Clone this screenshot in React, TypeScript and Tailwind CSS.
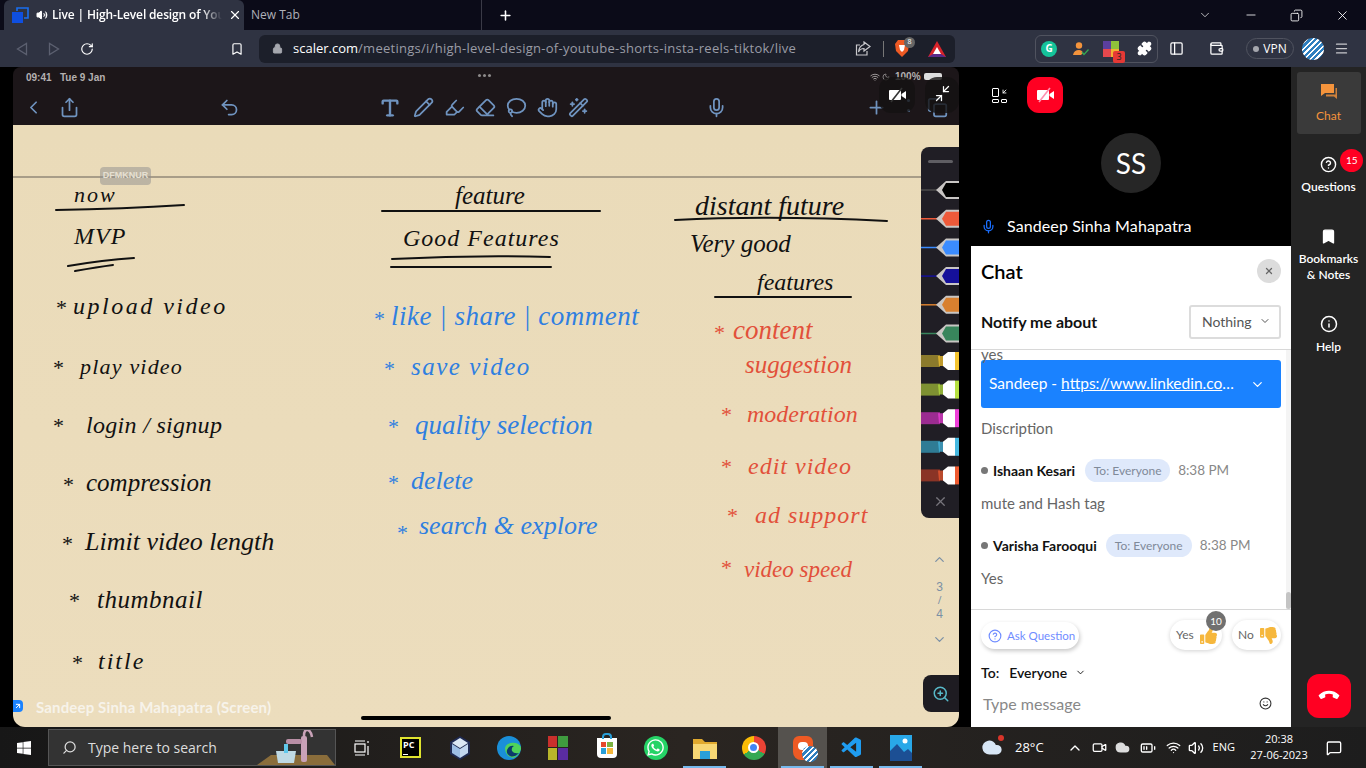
import {
  ArrowDownLeft,
  ArrowUpRight,
  Bookmark,
  ChevronDown,
  ChevronLeft,
  ChevronUp,
  Copy,
  Info,
  Lock,
  Mic,
  Minus,
  Pencil,
  Plus,
  RotateCw,
  Search,
  Share,
  Undo2,
  Volume2,
  Wifi,
  X,
  ZoomIn,
  Eraser,
  Highlighter,
  Puzzle,
  Wallet,
  PanelLeft,
  Menu,
  Smile,
  CircleHelp,
  BatteryMedium,
  Cloud,
  MessageSquare,
  Video,
  Type,
  Hand,
  Wand2,
  Lasso,
  Moon,
} from 'lucide-react'
import { FaThumbsDown, FaThumbsUp, FaWhatsapp, FaWindows, FaPhone } from 'react-icons/fa'
import { VscVscode } from 'react-icons/vsc'

const hand = "font-['Liberation_Serif',serif] italic whitespace-nowrap absolute leading-none"

const notes = [
  { t: 'now', c: 'left-[61px] top-[59px] text-[22px] tracking-[2px] text-[#111]' },
  { t: 'MVP', c: 'left-[61px] top-[99px] text-[24px] tracking-[1px] text-[#111]' },
  { t: 'upload video', c: 'left-[60px] top-[169px] text-[24px] tracking-[2.5px] text-[#111]' },
  { t: 'play video', c: 'left-[67px] top-[231px] text-[22px] tracking-[1.2px] text-[#111]' },
  { t: 'login / signup', c: 'left-[73px] top-[288px] text-[24px] tracking-[0.3px] text-[#111]' },
  { t: 'compression', c: 'left-[73px] top-[345px] text-[25px] text-[#111]' },
  { t: 'Limit video length', c: 'left-[72px] top-[404px] text-[26px] text-[#111]' },
  { t: 'thumbnail', c: 'left-[84px] top-[462px] text-[25px] tracking-[0.5px] text-[#111]' },
  { t: 'title', c: 'left-[85px] top-[524px] text-[24px] tracking-[2px] text-[#111]' },
  { t: 'feature', c: 'left-[442px] top-[58px] text-[25px] text-[#111]' },
  { t: 'Good Features', c: 'left-[390px] top-[101px] text-[24px] tracking-[1px] text-[#111]' },
  { t: 'like | share | comment', c: 'left-[378px] top-[178px] text-[27px] tracking-[0.5px] text-[#2f7fe0]' },
  { t: 'save video', c: 'left-[398px] top-[229px] text-[25px] tracking-[1.5px] text-[#2f7fe0]' },
  { t: 'quality selection', c: 'left-[402px] top-[287px] text-[27px] text-[#2f7fe0]' },
  { t: 'delete', c: 'left-[398px] top-[343px] text-[26px] text-[#2f7fe0]' },
  { t: 'search & explore', c: 'left-[406px] top-[388px] text-[26px] text-[#2f7fe0]' },
  { t: 'distant future', c: 'left-[682px] top-[67px] text-[28px] text-[#111]' },
  { t: 'Very good', c: 'left-[677px] top-[106px] text-[25px] text-[#111]' },
  { t: 'features', c: 'left-[744px] top-[145px] text-[24px] text-[#111]' },
  { t: 'content', c: 'left-[720px] top-[192px] text-[27px] text-[#e2503a]' },
  { t: 'suggestion', c: 'left-[732px] top-[227px] text-[25px] text-[#e2503a]' },
  { t: 'moderation', c: 'left-[734px] top-[277px] text-[24px] text-[#e2503a]' },
  { t: 'edit video', c: 'left-[735px] top-[329px] text-[24px] tracking-[1px] text-[#e2503a]' },
  { t: 'ad support', c: 'left-[742px] top-[378px] text-[24px] tracking-[1px] text-[#e2503a]' },
  { t: 'video speed', c: 'left-[731px] top-[433px] text-[23px] text-[#e2503a]' },
]

const bullets = [
  { c: 'left-[43px] top-[172px] text-[#111]' },
  { c: 'left-[40px] top-[232px] text-[#111]' },
  { c: 'left-[40px] top-[290px] text-[#111]' },
  { c: 'left-[50px] top-[349px] text-[#111]' },
  { c: 'left-[49px] top-[408px] text-[#111]' },
  { c: 'left-[56px] top-[465px] text-[#111]' },
  { c: 'left-[59px] top-[527px] text-[#111]' },
  { c: 'left-[361px] top-[183px] text-[#2f7fe0]' },
  { c: 'left-[371px] top-[233px] text-[#2f7fe0]' },
  { c: 'left-[375px] top-[291px] text-[#2f7fe0]' },
  { c: 'left-[375px] top-[347px] text-[#2f7fe0]' },
  { c: 'left-[384px] top-[397px] text-[#2f7fe0]' },
  { c: 'left-[701px] top-[197px] text-[#e2503a]' },
  { c: 'left-[708px] top-[279px] text-[#e2503a]' },
  { c: 'left-[708px] top-[331px] text-[#e2503a]' },
  { c: 'left-[714px] top-[380px] text-[#e2503a]' },
  { c: 'left-[708px] top-[432px] text-[#e2503a]' },
]

const fineliners = ['#000000', '#ee5a3a', '#3b8cff', '#15109a', '#d8802f', '#38855c']
const markers = ['#8b7a2c:#f4c430', '#7e9132:#b5e040', '#9b2c91:#ee3fd8', '#2f7c95:#45b8e0', '#8a3426:#ee5a30']

function CamOff({ slash }: { slash: string }) {
  return (
    <svg width="19" height="16" viewBox="0 0 19 16">
      <rect x="1" y="3" width="12" height="10" rx="1" fill="#fff" />
      <path d="M13.5 7L18 4V12L13.5 9Z" fill="#fff" />
      <path d="M3 15L14 1" stroke={slash} strokeWidth="1.6" />
    </svg>
  )
}

function PenTray() {
  return (
    <div className="absolute right-0 top-[22px] h-[371px] w-[38px] overflow-hidden rounded-l-lg bg-[#201e25]">
      <div className="absolute left-[7px] top-[13px] h-[3px] w-[25px] rounded bg-[#5f5e63]" />
      <svg className="absolute left-0 top-0" width="38" height="371" viewBox="0 0 38 371">
        {fineliners.map((color, i) => {
          const y = 43 + i * 28.7
          return (
            <g key={color}>
              <path d={`M0 ${y}H16`} stroke={color === '#000000' ? '#4b4b4b' : color} strokeWidth="1.5" />
              <path d={`M15 ${y}L25 ${y - 9}H38V${y + 9}H25Z`} fill="#c9c6c4" />
              <path d={`M25 ${y - 7}H38V${y + 7}H25L21 ${y}Z`} fill={color} />
            </g>
          )
        })}
        {markers.map((pair, i) => {
          const [band, tip] = pair.split(':')
          const y = 214 + i * 28.6
          return (
            <g key={pair}>
              <rect x="0" y={y - 6} width="19" height="12" fill={band} />
              <path d={`M17 ${y - 5}H23V${y + 5}H18Z`} fill={tip} opacity="0.75" />
              <path d={`M22 ${y - 5}L27 ${y - 9}H34V${y + 9}H27L22 ${y + 5}Z`} fill="#fff" />
              <rect x="34" y={y - 9} width="4" height="18" fill={tip} />
            </g>
          )
        })}
      </svg>
      <X className="absolute left-[12px] top-[347px] h-[15px] w-[15px] text-[#77757c]" />
    </div>
  )
}

function Paper() {
  return (
    <div className="relative flex-1 bg-gradient-to-b from-[#eadbb9] to-[#ecddbd]">
      <div className="absolute inset-x-0 top-[51px] h-[2px] bg-[#a89d88]" />
      <div className="absolute left-[87px] top-[42px] flex h-[18px] w-[51px] items-center justify-center rounded-sm bg-[#8e8e8e]/50 font-['Liberation_Sans',sans-serif] text-[9px] font-bold text-[#e6e0d2]">
        DFMKNUR
      </div>
      {notes.map((n) => (
        <span key={n.t} className={`${hand} ${n.c}`}>
          {n.t}
        </span>
      ))}
      {bullets.map((b) => (
        <span key={b.c} className={`${hand} text-[22px] not-italic ${b.c}`}>
          *
        </span>
      ))}
      {/* pen strokes under the headings */}
      <svg className="absolute left-0 top-0" width="908" height="300" viewBox="0 0 908 300" fill="none" strokeLinecap="round">
        <g stroke="#111" strokeWidth="2">
          <path d="M43 85Q110 84 171 80" />
          <path d="M55 141Q90 135 121 133M62 146Q85 142 100 140" />
          <path d="M369 86H587" />
          <path d="M379 134Q460 130 537 132M378 142H538" />
          <path d="M662 95Q760 90 874 96" />
          <path d="M702 172H838" />
        </g>
      </svg>
      <PenTray />
      <div className="absolute right-[12px] top-[427px] flex flex-col items-center text-[#7b90a5]">
        <ChevronUp className="h-[15px] w-[15px]" />
        <div className="mt-[13px] font-['Liberation_Sans',sans-serif] text-[12px] leading-[14px]">3</div>
        <div className="text-[10px] leading-[13px]">/</div>
        <div className="font-['Liberation_Sans',sans-serif] text-[12px] leading-[14px]">4</div>
        <ChevronDown className="mt-[11px] h-[15px] w-[15px]" />
      </div>
      <div className="absolute right-0 top-[550px] flex h-[37px] w-[36px] items-center justify-center rounded-l-lg bg-[#1e1c22]">
        <ZoomIn className="h-[18px] w-[18px] text-[#57b8c8]" />
      </div>
      <div className="absolute left-[348px] top-[591px] h-[4px] w-[250px] rounded-full bg-black" />
      <div className="absolute left-[23px] top-[571px] font-['Lato',sans-serif] text-[15px] font-bold tracking-[0.15px] text-[#f7f3ea]">
        Sandeep Sinha Mahapatra (Screen)
      </div>
      <div className="absolute left-0 top-[575px] flex h-[12px] w-[10px] items-center justify-center rounded-r-sm bg-[#1a82ff]">
        <ArrowUpRight className="h-[8px] w-[8px] text-white" strokeWidth={3} />
      </div>
    </div>
  )
}

function VideoArea() {
  const icon = 'h-[21px] w-[21px] text-[#6f93bf]'
  return (
    <div className="relative w-[971px] bg-black">
      <div className="ml-[13px] flex h-[660px] w-[946px] flex-col overflow-hidden rounded-b-xl rounded-t-lg">
        <div className="relative h-[58px] bg-[#1c1619] font-['Liberation_Sans',sans-serif] text-[#b4b0b0]">
          <div className="absolute left-[13px] top-[3px] text-[10px] font-bold">09:41&nbsp;&nbsp; Tue 9 Jan</div>
          <div className="absolute left-[465px] top-[7px] flex gap-[2px]">
            <i className="h-[3px] w-[3px] rounded-full bg-[#8d8a8a]" />
            <i className="h-[3px] w-[3px] rounded-full bg-[#8d8a8a]" />
            <i className="h-[3px] w-[3px] rounded-full bg-[#8d8a8a]" />
          </div>
          <div className="absolute left-[857px] top-[2px] flex items-center gap-[2px] text-[10px] font-bold">
            <Wifi className="h-[10px] w-[10px]" />
            <Moon className="h-[8px] w-[8px]" />
            <span className="ml-[3px]">100%</span>
            <span className="ml-[1px] h-[7px] w-[18px] rounded-[2px] bg-[#ddd]" />
          </div>
          <ChevronLeft className={`absolute left-[10px] top-[30px] ${icon}`} />
          <Share className={`absolute left-[46px] top-[30px] ${icon}`} />
          <Undo2 className={`absolute left-[206px] top-[30px] ${icon}`} />
          <Type className="absolute left-[366px] top-[30px] h-[22px] w-[22px] text-[#6f93bf]" strokeWidth={2.6} />
          <Pencil className={`absolute left-[400px] top-[30px] ${icon}`} />
          <Highlighter className={`absolute left-[431px] top-[30px] ${icon}`} />
          <Eraser className={`absolute left-[462px] top-[30px] ${icon}`} />
          <Lasso className={`absolute left-[493px] top-[30px] ${icon}`} />
          <Hand className={`absolute left-[524px] top-[30px] ${icon}`} />
          <Wand2 className={`absolute left-[555px] top-[30px] ${icon}`} />
          <Mic className={`absolute left-[693px] top-[30px] ${icon}`} />
          <Plus className={`absolute left-[853px] top-[30px] ${icon}`} />
          <div className="absolute left-[894px] top-[32px] flex flex-col gap-[7px]">
            <i className="h-[3px] w-[3px] rounded-full bg-[#6f93bf]" />
            <i className="h-[3px] w-[3px] rounded-full bg-[#6f93bf]" />
          </div>
          <Copy className={`absolute left-[914px] top-[30px] ${icon}`} />
        </div>
        <Paper />
      </div>
      {/* meeting overlay buttons sit on the shared screen */}
      <div className="absolute left-[879px] top-[10px] flex h-[36px] w-[36px] items-center justify-center rounded-xl bg-[#141112]/80">
        <CamOff slash="#333" />
      </div>
      <div className="absolute left-[925px] top-[10px] flex h-[36px] w-[34px] items-center justify-center rounded-xl bg-[#141112]/80">
        <ArrowDownLeft className="absolute left-[15px] top-[6px] h-[12px] w-[12px] text-white" strokeWidth={2.5} />
        <ArrowUpRight className="absolute left-[8px] top-[15px] h-[12px] w-[12px] text-white" strokeWidth={2.5} />
      </div>
    </div>
  )
}

function Pill({ wide }: { wide?: boolean }) {
  return (
    <span className={`flex h-[23px] items-center justify-center rounded-full bg-[#dfe9fb] text-[12px] text-[#7f8a99] ${wide ? 'w-[86px]' : 'w-[85px]'}`}>
      To: Everyone
    </span>
  )
}

function ChatPanel() {
  return (
    <div className="flex w-[320px] flex-col font-['Lato',sans-serif]">
      <div className="relative h-[179px] bg-black text-white">
        <div className="absolute left-[21px] top-[21px] grid h-[15px] w-[15px] grid-cols-2 gap-[2px]">
          <i className="rounded-[1px] border-[1.5px] border-white" />
          <ArrowDownLeft className="h-[7px] w-[7px] text-white" strokeWidth={3} />
          <i className="rounded-[1px] border-[1.5px] border-white" />
          <i className="rounded-[1px] border-[1.5px] border-white" />
        </div>
        <div className="absolute left-[56px] top-[10px] flex h-[36px] w-[36px] items-center justify-center rounded-xl bg-[#ff0022]">
          <CamOff slash="#ff8fb0" />
        </div>
        <div className="absolute left-[130px] top-[66px] flex h-[60px] w-[60px] items-center justify-center rounded-full bg-[#262626] text-[28px]">
          SS
        </div>
        <div className="absolute left-[10px] top-[147px] flex items-center">
          <Mic className="h-[15px] w-[15px] text-[#1a6fff]" />
          <span className="ml-[11px] text-[16px] tracking-[0.1px]">Sandeep Sinha Mahapatra</span>
        </div>
      </div>

      <div className="flex flex-1 flex-col bg-white text-[#333]">
        <div className="flex h-[104px] flex-col border-b border-[#d8d8d8] px-[10px]">
          <div className="mt-[13px] flex items-center justify-between">
            <span className="text-[20px] font-semibold leading-[24px] text-black">Chat</span>
            <span className="flex h-[24px] w-[24px] items-center justify-center rounded-full bg-[#dcdcdc]">
              <X className="h-[10px] w-[10px] text-[#666]" strokeWidth={3} />
            </span>
          </div>
          <div className="mt-[22px] flex items-center justify-between">
            <span className="text-[16px] font-bold leading-[20px] text-[#111]">Notify me about</span>
            <span className="flex h-[34px] w-[92px] items-center gap-[7px] rounded-[3px] border-2 border-[#dcdcdc] pb-[2px] pl-[11px] text-[14px] text-[#555]">
              Nothing
              <ChevronDown className="h-[12px] w-[12px]" />
            </span>
          </div>
        </div>

        <div className="relative h-[260px] overflow-hidden border-b border-[#d8d8d8] pl-[10px] pr-[10px] text-[16px] text-[#666]">
          <div className="h-[10px] text-[15px] leading-[8px]">yes</div>
          <div className="flex h-[48px] w-[300px] items-center justify-between rounded-[3px] bg-[#1a82ff] pl-[8px] pr-[16px] text-white">
            <span className="w-[252px] truncate text-[15.5px]">
              Sandeep - <span className="underline">https://www.linkedin.com/in/sandeep</span>
            </span>
            <ChevronDown className="h-[15px] w-[15px]" />
          </div>
          <div className="mt-[10px] text-[15px] leading-[20px]">Discription</div>
          <div className="mt-[21px] flex h-[23px] items-center">
            <i className="h-[7px] w-[7px] rounded-full bg-[#777]" />
            <b className="ml-[5px] text-[14px] text-[#111]">Ishaan Kesari</b>
            <span className="ml-[10px]"><Pill /></span>
            <span className="ml-[8px] text-[13.5px] text-[#888]">8:38 PM</span>
          </div>
          <div className="mt-[11px] text-[15px] leading-[20px]">mute and Hash tag</div>
          <div className="mt-[21px] flex h-[23px] items-center">
            <i className="h-[7px] w-[7px] rounded-full bg-[#777]" />
            <b className="ml-[5px] text-[14px] text-[#111]">Varisha Farooqui</b>
            <span className="ml-[9px]"><Pill wide /></span>
            <span className="ml-[8px] text-[13.5px] text-[#888]">8:38 PM</span>
          </div>
          <div className="mt-[11px] text-[15px] leading-[20px]">Yes</div>
          <div className="absolute right-0 top-0 h-full w-[5px] bg-[#f4f4f4]" />
          <div className="absolute bottom-0 right-0 h-[17px] w-[5px] rounded bg-[#c4c4c4]" />
        </div>

        <div className="relative flex-1 px-[10px]">
          <div className="absolute left-[10px] top-[12px] flex h-[27px] w-[98px] items-center gap-[5px] whitespace-nowrap rounded-full pl-[7px] text-[11.5px] text-[#6f8cff] shadow-[1px_2px_4px_rgba(0,0,0,0.22)]">
            <CircleHelp className="h-[14px] w-[14px]" />
            Ask Question
          </div>
          <div className="absolute left-[199px] top-[10px] flex h-[30px] w-[52px] items-center gap-[6px] rounded-full pl-[6px] text-[12px] text-[#666] shadow-[0_1px_4px_rgba(0,0,0,0.18)]">
            Yes
            <FaThumbsUp className="h-[17px] w-[17px] text-[#f6b73c]" />
          </div>
          <div className="absolute left-[235px] top-[1px] flex h-[20px] w-[20px] items-center justify-center rounded-full bg-[#707070] text-[10px] text-white">
            10
          </div>
          <div className="absolute left-[261px] top-[10px] flex h-[30px] w-[49px] items-center gap-[6px] rounded-full pl-[6px] text-[12px] text-[#666] shadow-[0_1px_4px_rgba(0,0,0,0.18)]">
            No
            <FaThumbsDown className="h-[17px] w-[17px] text-[#f6b73c]" />
          </div>
          <div className="absolute left-[10px] top-[52px] flex items-center text-[14px] font-semibold text-[#111]">
            To:
            <span className="ml-[10px]">Everyone</span>
            <ChevronDown className="ml-[8px] h-[11px] w-[11px]" />
          </div>
          <div className="absolute left-[12px] top-[82px] text-[16px] text-[#888]">Type message</div>
          <Smile className="absolute left-[288px] top-[87px] h-[13px] w-[13px] text-[#333]" />
        </div>
      </div>
    </div>
  )
}

function SideRail() {
  const label = 'text-[12px] leading-[16px] text-white font-semibold text-center'
  return (
    <div className="flex w-[75px] flex-col items-center bg-[#242424] font-['Lato',sans-serif]">
      <div className="mt-[5px] flex h-[62px] w-[64px] flex-col items-center rounded-[3px] bg-[#3a3a3a] pt-[11px]">
        <svg width="18" height="18" viewBox="0 0 18 18" fill="#f5943c">
          <path d="M1 1H14V10H5L1 13Z" />
          <path d="M15.5 5H17V16L14 13.5H6V11.5H15.5Z" opacity="0.8" />
        </svg>
        <span className="mt-[7px] text-[12px] leading-[16px] text-[#f5943c]">Chat</span>
      </div>
      <div className="relative mt-[22px] flex flex-col items-center">
        <CircleHelp className="h-[17px] w-[17px] text-white" />
        <span className="absolute left-[39px] top-[-7px] flex h-[23px] w-[23px] items-center justify-center rounded-full bg-[#ff0022] text-[10px] text-white">
          15
        </span>
        <span className={`mt-[6px] ${label}`}>Questions</span>
      </div>
      <div className="mt-[33px] flex flex-col items-center">
        <Bookmark className="h-[17px] w-[17px] fill-white text-white" />
        <span className={`mt-[6px] ${label}`}>
          Bookmarks
          <br />& Notes
        </span>
      </div>
      <div className="mt-[32px] flex flex-col items-center">
        <Info className="h-[18px] w-[18px] text-white" />
        <span className={`mt-[6px] ${label}`}>Help</span>
      </div>
      <div className="mb-[9px] mt-auto flex h-[44px] w-[44px] items-center justify-center rounded-xl bg-[#ff0022]">
        <FaPhone className="h-[16px] w-[16px] rotate-[225deg] text-white" />
      </div>
    </div>
  )
}

function TabStrip() {
  return (
    <div className="flex h-[30px] bg-[#0b0b18] font-['Open_Sans',sans-serif] text-[12px]">
      <div className="ml-[4px] flex h-[30px] w-[240px] items-center rounded-t-md bg-[#2f3342] pl-[8px] text-white">
        <svg width="17" height="16" viewBox="0 0 17 16">
          <rect x="0" y="5" width="11" height="11" fill="#0f4fe0" />
          <path d="M5 4V1H16V11H12" fill="none" stroke="#1a6ff0" strokeWidth="1.6" />
        </svg>
        <Volume2 className="ml-[7px] h-[12px] w-[12px] fill-white" />
        <span className="ml-[4px] w-[170px] overflow-hidden whitespace-nowrap font-semibold tracking-[-0.15px] [mask-image:linear-gradient(to_right,#000_88%,transparent)]">
          Live | High-Level design of You
        </span>
        <X className="ml-[6px] h-[14px] w-[14px]" />
      </div>
      <div className="ml-[7px] flex h-[30px] w-[231px] items-center border-r border-[#3a3a46] text-[#aeb0b8]">New Tab</div>
      <div className="ml-[16px] flex items-center text-white">
        <Plus className="h-[15px] w-[15px]" strokeWidth={2.5} />
      </div>
      <div className="ml-auto flex items-center text-white">
        <ChevronDown className="h-[14px] w-[14px]" strokeWidth={1.2} />
        <Minus className="ml-[32px] h-[14px] w-[14px]" strokeWidth={1.4} />
        <Copy className="ml-[32px] h-[13px] w-[13px] scale-x-[-1]" strokeWidth={1.6} />
        <X className="ml-[32px] mr-[16px] h-[15px] w-[15px]" strokeWidth={1.4} />
      </div>
    </div>
  )
}

function AddressBar() {
  return (
    <div className="flex h-[37px] items-center bg-[#2f3342] font-['Open_Sans',sans-serif] text-[13px]">
      <svg className="ml-[16px]" width="12" height="14" viewBox="0 0 12 14" fill="none" stroke="#5c6070" strokeWidth="1.3">
        <path d="M10.5 1.5V12.5L1.5 7Z" />
      </svg>
      <svg className="ml-[20px]" width="12" height="14" viewBox="0 0 12 14" fill="none" stroke="#5c6070" strokeWidth="1.3">
        <path d="M1.5 1.5V12.5L10.5 7Z" />
      </svg>
      <RotateCw className="ml-[20px] h-[14px] w-[14px] text-white" strokeWidth={2} />
      <Bookmark className="ml-[136px] h-[14px] w-[14px] text-white" strokeWidth={2} />
      <div className="ml-[15px] flex h-[28px] w-[696px] items-center rounded-md bg-[#1c1f2a] pl-[13px]">
        <Lock className="h-[11px] w-[11px] fill-[#a5a7ae] text-[#a5a7ae]" />
        <span className="ml-[10px] text-white">scaler.com</span>
        <span className="tracking-[0.27px] text-[#9a9ca6]">/meetings/i/high-level-design-of-youtube-shorts-insta-reels-tiktok/live</span>
        <div className="ml-auto flex items-center pr-[9px]">
          <svg width="16" height="15" viewBox="0 0 16 15" fill="none" stroke="#c8c8cc" strokeWidth="1.2">
            <path d="M5 4H1.5V14H12V10" />
            <path d="M9 1L15 5.5L9 10V7.5Q5 7.5 3.5 11Q4 5 9 3.5Z" />
          </svg>
          <span className="ml-[12px] h-[16px] w-px bg-[#777]" />
          <span className="relative ml-[11px] block h-[17px] w-[14px]">
            <svg className="absolute left-0 top-0" width="14" height="17" viewBox="0 0 14 17">
              <path d="M3 0H11L14 4L13 11L7 17L1 11L0 4Z" fill="#ee5a24" />
              <path d="M4 5H10L9 10L7 12L5 10Z" fill="#fff" />
            </svg>
            <span className="absolute left-[9px] top-[-3px] flex h-[11px] w-[11px] items-center justify-center rounded-full bg-[#666] text-[7px] text-white">8</span>
          </span>
          <svg className="ml-[19px]" width="18" height="16" viewBox="0 0 18 16">
            <path d="M9 0L18 16H0Z" fill="#d8232a" />
            <path d="M9 6L13 13H5Z" fill="#fff" />
            <path d="M0 16L5 13H13L18 16Z" fill="#5a2a8a" />
          </svg>
        </div>
      </div>
      <div className="ml-[80px] flex h-[28px] w-[123px] items-center rounded-md border border-[#50535f] pl-[5px]">
        <span className="flex h-[16px] w-[16px] items-center justify-center rounded-full bg-[#15c39a] text-[10px] font-bold text-white">G</span>
        <svg className="ml-[16px]" width="16" height="14" viewBox="0 0 16 14">
          <circle cx="6" cy="3.5" r="3.2" fill="#f5943c" />
          <path d="M0 13Q1 8 6 8Q9 8 10 11L8 13Z" fill="#f5943c" />
          <path d="M9 10L11 12.5L15.5 7.5" fill="none" stroke="#34a853" strokeWidth="1.3" />
        </svg>
        <span className="relative ml-[14px] grid h-[16px] w-[16px] grid-cols-2">
          <i className="bg-[#5b3f9e]" />
          <i className="bg-[#8fc33a]" />
          <i className="bg-[#e5484d]" />
          <i className="bg-[#f2b233]" />
          <span className="absolute left-[10px] top-[10px] flex h-[12px] w-[12px] items-center justify-center rounded-[2px] bg-[#e53935] text-[9px] text-[#222]">3</span>
        </span>
        <Puzzle className="ml-[18px] h-[15px] w-[15px] fill-white text-white" />
      </div>
      <PanelLeft className="ml-[11px] h-[15px] w-[15px] text-white" />
      <Wallet className="ml-[25px] h-[15px] w-[15px] text-white" />
      <div className="ml-[22px] flex h-[21px] w-[48px] items-center justify-center gap-[4px] rounded-full border border-[#50535f] text-[12px] text-white">
        <i className="h-[6px] w-[6px] rounded-full bg-[#a5a7ae]" />
        VPN
      </div>
      <span className="ml-[8px] h-[22px] w-[22px] rounded-full bg-[repeating-linear-gradient(135deg,#fff_0px,#fff_1.5px,#2f7fbf_1.5px,#2f7fbf_4px)]" />
      <Menu className="ml-[10px] h-[15px] w-[15px] text-[#c8c8cc]" />
    </div>
  )
}

function TaskIcon({ active, under, children }: { active?: boolean; under?: boolean; children: React.ReactNode }) {
  return (
    <div className={`relative flex h-[41px] w-[49px] items-center justify-center ${active ? 'bg-[#55524e]' : ''}`}>
      {children}
      {under && <i className="absolute inset-x-[3px] bottom-0 h-[2px] bg-[#76b9ed]" />}
    </div>
  )
}

function Taskbar() {
  return (
    <div className="flex h-[41px] items-center bg-gradient-to-r from-[#171717] via-[#2a2521] to-[#1d1d1d] font-['Open_Sans',sans-serif] text-white">
      <div className="flex w-[48px] justify-center">
        <FaWindows className="h-[16px] w-[16px]" />
      </div>
      <div className="relative flex h-[37px] w-[288px] items-center overflow-hidden border border-[#555] bg-[#333] pl-[13px] text-[14px] text-[#ddd]">
        <Search className="h-[15px] w-[15px] scale-x-[-1]" />
        <span className="ml-[11px]">Type here to search</span>
        <svg className="absolute bottom-0 right-0" width="78" height="37" viewBox="0 0 78 37">
          <path d="M0 37L14 27H70L78 37Z" fill="#8a6d3b" />
          <path d="M19 23H39L37 35H21Z" fill="#bfd9e3" />
          <rect x="27" y="16" width="4" height="9" fill="#5fc7ea" />
          <rect x="44" y="8" width="6" height="26" rx="2" fill="#c9a2b8" />
          <rect x="29" y="11" width="16" height="5" rx="2" fill="#b98fa6" />
          <path d="M47 8Q47 1 51 2Q54 3 55 9" fill="none" stroke="#c9a2b8" strokeWidth="2.5" />
        </svg>
      </div>
      <div className="flex w-[50px] justify-center pl-[1px]">
        <svg className="ml-[1px]" width="16" height="16" viewBox="0 0 16 16" fill="none" stroke="#fff" strokeWidth="1.2">
          <rect x="1" y="4" width="10" height="8" />
          <path d="M1 1H11M1 15H11M14 1V3M14 6V15" />
        </svg>
      </div>
      <TaskIcon>
        <span className="flex h-[21px] w-[21px] flex-col justify-between border-2 border-[#dfe32f] bg-black p-[1px] text-[9px] font-bold leading-[10px]">
          PC
          <i className="h-[1px] w-[5px] bg-white" />
        </span>
      </TaskIcon>
      <TaskIcon>
        <svg width="20" height="24" viewBox="0 0 20 24">
          <path d="M10 0L20 6V18L10 24L0 18V6Z" fill="#1f2a52" />
          <path d="M10 2L18 7L10 12L2 7Z" fill="#dbe8f5" />
          <path d="M2 8L10 13V22L2 17Z" fill="#9dbfe6" />
          <path d="M18 8L10 13V22L18 17Z" fill="#c2d7f0" />
        </svg>
      </TaskIcon>
      <TaskIcon>
        <svg width="24" height="24" viewBox="0 0 24 24">
          <circle cx="12" cy="12" r="12" fill="#1a8fd8" />
          <path d="M24 13A7 5 0 0 0 8 12Q8 20 16 22Q22 20 24 13Z" fill="#4fd35a" />
          <path d="M10 14Q12 9 17 10Q14 11 15 15Q17 18 22 17Q17 22 13 20Q9 18 10 14Z" fill="#0b3a6b" />
        </svg>
      </TaskIcon>
      <TaskIcon>
        <span className="grid h-[24px] w-[20px] grid-cols-2 gap-[1px]">
          <i className="bg-[#c9302c]" />
          <i className="bg-[#3f9b3f]" />
          <i className="bg-[#b8b52a]" />
          <i className="bg-[#5a2ca0]" />
        </span>
      </TaskIcon>
      <TaskIcon>
        <span className="relative grid h-[20px] w-[20px] grid-cols-2 gap-[1px] rounded-b-sm bg-white p-[4px]">
          <i className="bg-[#e5482d]" />
          <i className="bg-[#7cb342]" />
          <i className="bg-[#2a9fd8]" />
          <i className="bg-[#f6b73c]" />
          <i className="absolute left-[5px] top-[-5px] h-[6px] w-[10px] rounded-t border-2 border-b-0 border-[#2a9fd8]" />
        </span>
      </TaskIcon>
      <TaskIcon>
        <span className="flex h-[24px] w-[24px] items-center justify-center rounded-full bg-[#25d366]">
          <FaWhatsapp className="h-[19px] w-[19px] text-white" />
        </span>
      </TaskIcon>
      <TaskIcon under>
        <svg width="24" height="22" viewBox="0 0 24 22">
          <path d="M0 2H9L12 5H24V10H0Z" fill="#e0a92e" />
          <rect x="0" y="7" width="24" height="15" fill="#f7d774" />
          <rect x="7" y="14" width="10" height="8" fill="#2a9fd8" />
        </svg>
      </TaskIcon>
      <TaskIcon>
        <span className="flex h-[24px] w-[24px] items-center justify-center rounded-full bg-[conic-gradient(#ea4335_0_33%,#34a853_33%_66%,#fbbc05_66%_100%)]">
          <i className="h-[11px] w-[11px] rounded-full border-2 border-white bg-[#4285f4]" />
        </span>
      </TaskIcon>
      <TaskIcon active under>
        <span className="relative h-[24px] w-[20px] rounded-b-lg rounded-t-md bg-[#ee5a24]">
          <i className="absolute left-[5px] top-[6px] h-[8px] w-[10px] rounded-sm bg-white" />
          <i className="absolute left-[9px] top-[10px] h-[16px] w-[16px] rounded-full bg-[repeating-linear-gradient(135deg,#fff_0px,#fff_1.5px,#2f7fbf_1.5px,#2f7fbf_4px)]" />
        </span>
      </TaskIcon>
      <TaskIcon under>
        <VscVscode className="h-[24px] w-[24px] text-[#1f9cf0]" />
      </TaskIcon>
      <TaskIcon under>
        <svg width="22" height="26" viewBox="0 0 22 26">
          <rect width="22" height="26" fill="#29a8e8" />
          <circle cx="15" cy="6" r="2.5" fill="#fff" />
          <path d="M0 26V16L7 9L14 17L18 14L22 18V26Z" fill="#1c4f94" />
        </svg>
      </TaskIcon>
      <div className="ml-auto flex items-center text-[12px]">
        <span className="relative">
          <Cloud className="h-[21px] w-[24px] fill-[#d8e6f5] text-[#d8e6f5]" />
          <i className="absolute right-0 top-[-2px] h-[6px] w-[6px] rounded-full bg-[#d8352a]" />
        </span>
        <span className="ml-[11px] text-[13px]">28°C</span>
        <ChevronUp className="ml-[23px] h-[16px] w-[16px]" />
        <Video className="ml-[9px] h-[15px] w-[15px]" />
        <Cloud className="ml-[8px] h-[15px] w-[15px] fill-[#ddd] text-[#ddd]" />
        <BatteryMedium className="ml-[10px] h-[16px] w-[16px]" />
        <Wifi className="ml-[10px] h-[15px] w-[15px]" />
        <Volume2 className="ml-[7px] h-[16px] w-[16px]" />
        <span className="ml-[9px] text-[11px]">ENG</span>
        <div className="ml-[14px] flex w-[60px] flex-col items-center pb-[2px] text-[11px] leading-[16px]">
          <span>20:38</span>
          <span>27-06-2023</span>
        </div>
        <MessageSquare className="ml-[17px] mr-[24px] h-[16px] w-[16px]" />
      </div>
    </div>
  )
}

export default function App() {
  return (
    <div className="flex h-[768px] w-[1366px] flex-col overflow-hidden bg-black">
      <TabStrip />
      <AddressBar />
      <div className="flex h-[660px]">
        <VideoArea />
        <ChatPanel />
        <SideRail />
      </div>
      <Taskbar />
    </div>
  )
}
